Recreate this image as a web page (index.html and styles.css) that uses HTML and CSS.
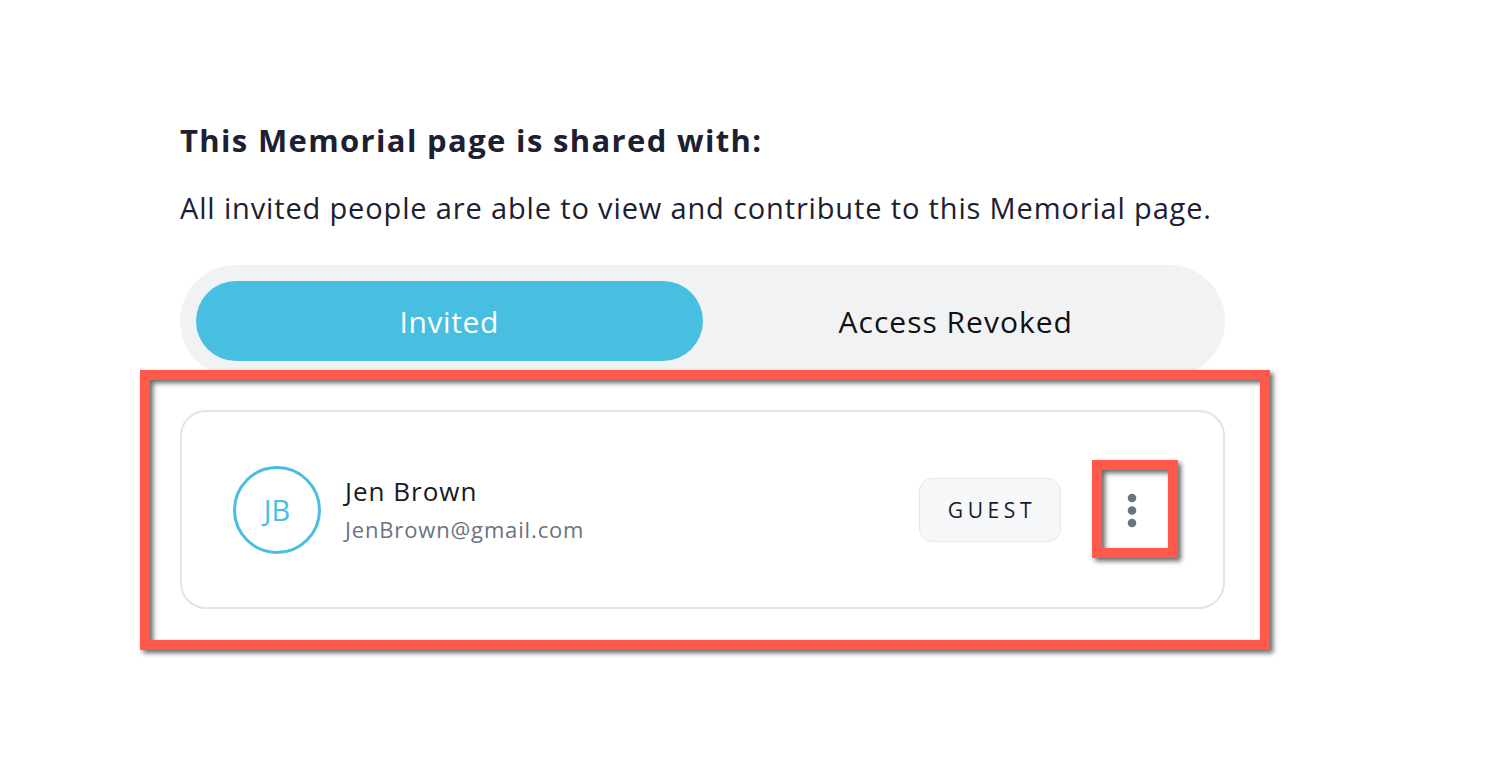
FILE: index.html
```html
<!DOCTYPE html>
<html lang="en">
<head>
<meta charset="utf-8">
<title>Shared with</title>
<link rel="stylesheet" href="styles.css">
</head>
<body>
<main class="page">
  <h1 class="title">This Memorial page is shared with:</h1>
  <p class="subtitle">All invited people are able to view and contribute to this Memorial page.</p>
  <div class="tabs">
    <div class="tab tab-active">Invited</div>
    <div class="tab">Access Revoked</div>
  </div>
  <div class="card">
    <div class="avatar">JB</div>
    <div class="info">
      <div class="name">Jen Brown</div>
      <div class="email">JenBrown@gmail.com</div>
    </div>
    <div class="badge">GUEST</div>
    <div class="kebab" aria-label="More">
      <svg width="12" height="40" viewBox="0 0 12 40">
        <circle cx="6" cy="8" r="4.3" fill="#6b7280"/>
        <circle cx="6" cy="20.5" r="4.3" fill="#6b7280"/>
        <circle cx="6" cy="33" r="4.3" fill="#6b7280"/>
      </svg>
    </div>
  </div>
  <div class="mark mark-card"></div>
  <div class="mark mark-kebab"></div>
</main>
</body>
</html>
```

FILE: styles.css
```css
* { box-sizing: border-box; }
html, body { margin: 0; padding: 0; background: #ffffff; }
body {
  font-family: "Open Sans", "Noto Sans", sans-serif;
  color: #1c2030;
}
.page {
  position: relative;
  width: 1488px;
  height: 764px;
  padding: 118px 0 0 180px;
}
.title {
  margin: 0;
  font-size: 31px;
  font-weight: 700;
  line-height: 44px;
  color: #1c2030;
  letter-spacing: 1.35px;
}
.subtitle {
  margin: 28px 0 0 0;
  font-size: 29px;
  font-weight: 400;
  line-height: 36px;
  color: #1c2030;
  letter-spacing: 0.85px;
}
.tabs {
  margin-top: 39px;
  width: 1045px;
  height: 112px;
  padding: 16px;
  border-radius: 56px;
  background: #f1f2f4;
  display: flex;
}
.tab {
  flex: 1 1 0;
  display: flex;
  align-items: center;
  justify-content: center;
  font-size: 30px;
  font-weight: 500;
  color: #111111;
  border-radius: 40px;
  letter-spacing: 1px;
}
.tab-active {
  background: #48bfe1;
  color: #ffffff;
  font-weight: 400;
  letter-spacing: 0.6px;
}
.card {
  margin-top: 33px;
  width: 1045px;
  height: 199px;
  border: 2px solid #e2e4e8;
  border-radius: 26px;
  display: flex;
  align-items: center;
  padding: 0 79px 0 51px;
}
.avatar {
  width: 88px;
  height: 88px;
  border: 3.5px solid #48bfe1;
  border-radius: 50%;
  display: flex;
  align-items: center;
  justify-content: center;
  color: #48bfe1;
  font-size: 29px;
  font-weight: 400;
  flex: none;
}
.info {
  margin-left: 24px;
  flex: 1 1 auto;
  display: flex;
  flex-direction: column;
  gap: 9px;
}
.name {
  font-size: 26px;
  font-weight: 500;
  color: #161a28;
  line-height: 30px;
  letter-spacing: 1px;
}
.email {
  font-size: 22px;
  font-weight: 400;
  color: #6b7280;
  line-height: 28px;
  letter-spacing: 0.85px;
}
.badge {
  flex: none;
  width: 142px;
  height: 64px;
  border: 1.5px solid #e5e7eb;
  background: #f6f7f9;
  border-radius: 13px;
  display: flex;
  align-items: center;
  justify-content: center;
  font-size: 21px;
  font-weight: 500;
  letter-spacing: 4.6px;
  color: #161a28;
  padding-left: 4px;
}
.kebab {
  flex: none;
  margin-left: 59px;
  width: 24px;
  height: 40px;
  display: flex;
  align-items: center;
  justify-content: center;
}
.kebab svg { display: block; }
.mark {
  position: absolute;
  border: 10px solid #ff594c;
  filter: drop-shadow(3px 3px 2.5px rgba(0, 0, 0, 0.6));
}
.mark-card {
  left: 140px;
  top: 370px;
  width: 1130px;
  height: 280px;
}
.mark-kebab {
  left: 1092px;
  top: 460px;
  width: 86px;
  height: 98px;
}
```
